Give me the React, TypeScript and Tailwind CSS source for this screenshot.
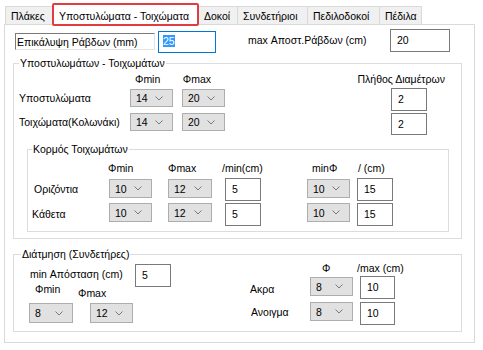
import React from 'react';

const Chevron = () => (
  <svg width="8" height="5" viewBox="0 0 8 5" className="shrink-0">
    <polyline points="0.5,0.5 4,4 7.5,0.5" fill="none" stroke="#7a7a7a" strokeWidth="1" />
  </svg>
);

interface ComboProps {
  value: string;
  className?: string;
}

const Combo: React.FC<ComboProps> = ({ value, className = '' }) => (
  <div className={`flex items-center justify-between border border-[#adadad] bg-[#e1e1e1] pl-[5px] pr-[9px] ${className}`}>
    <span>{value}</span>
    <Chevron />
  </div>
);

const TextBox: React.FC<ComboProps> = ({ value, className = '' }) => (
  <div className={`border border-[#7a7a7a] bg-white pl-[6px] pt-[3px] ${className}`}>{value}</div>
);

const Tab: React.FC<{ label: string; className?: string }> = ({ label, className = '' }) => (
  <div className={`h-[18px] border border-b-0 border-[#d9d9d9] bg-[#f0f0f0] pl-[5px] pt-[2px] ${className}`}>{label}</div>
);

export default function App() {
  return (
    <div className="w-[483px] h-[350px] bg-white whitespace-nowrap text-[10.5px] leading-[14px] text-black font-['Liberation_Sans',Arial,sans-serif]">
      {/* tab strip */}
      <div className="flex items-end h-[24px] pl-[5px]">
        <Tab label="Πλάκες" className="w-[47px] border-r-0" />
        <div className="relative z-10 -mb-[2px] h-[23px] w-[147px] rounded-[2px] border-2 border-[#e23b40] bg-white pl-[5px] pt-[4px]">
          Υποστυλώματα - Τοιχώματα
        </div>
        <Tab label="Δοκοί" className="w-[39px] border-l-0" />
        <Tab label="Συνδετήριοι" className="w-[70px] border-l-0" />
        <Tab label="Πεδιλοδοκοί" className="w-[72px] border-l-0" />
        <Tab label="Πέδιλα" className="w-[42px] border-l-0" />
      </div>

      {/* page */}
      <div className="ml-[4px] w-[471px] h-[319px] border border-[#d9d9d9] bg-white">
        <div className="flex items-start pt-[4px]">
          <div className="ml-[10px] mt-[4px] w-[140px] h-[17px] border border-t-[#7a7a7a] border-l-[#7a7a7a] border-r-[#e3e3e3] border-b-[#e3e3e3] pl-[1px] pt-[1px]">
            Επικάλυψη Ράβδων (mm)
          </div>
          <div className="ml-[3px] mt-[2px] w-[58px] h-[22px] border border-[#0078d7] bg-white pl-[4px] pt-[2px]">
            <span className="bg-[#3399ff] text-white">25</span>
          </div>
          <div className="ml-[32px] mt-[4px] w-[142px]">max Αποστ.Ράβδων (cm)</div>
          <TextBox value="20" className="w-[60px] h-[23px]" />
        </div>

        {/* Υποστυλωμάτων - Τοιχωμάτων */}
        <div className="ml-[8px] mt-[10px] w-[449px] h-[176px] border border-[#dcdcdc]">
          <div className="-mt-[8px] ml-[5px] w-fit bg-white px-[1px] h-[14px]">Υποστυλωμάτων - Τοιχωμάτων</div>
          <div className="mt-[2px] flex h-[14px] pl-[121px]">
            <div className="w-[48px]">Φmin</div>
            <div className="w-[159px]">Φmax</div>
            <div className="w-[120px] text-center">Πλήθος Διαμέτρων</div>
          </div>
          <div className="mt-[2px] flex items-start h-[23px]">
            <div className="w-[116px] pl-[5px] mt-[3px]">Υποστυλώματα</div>
            <Combo value="14" className="mt-[1px] w-[43px] h-[18px]" />
            <Combo value="20" className="ml-[9px] mt-[1px] w-[43px] h-[18px]" />
            <TextBox value="2" className="ml-[166px] w-[36px] h-[23px]" />
          </div>
          <div className="mt-[2px] flex items-start h-[23px]">
            <div className="w-[116px] pl-[5px] mt-[2px]">Τοιχώματα(Κολωνάκι)</div>
            <Combo value="14" className="w-[43px] h-[18px]" />
            <Combo value="20" className="ml-[9px] w-[43px] h-[18px]" />
            <TextBox value="2" className="ml-[166px] w-[36px] h-[22px]" />
          </div>

          {/* Κορμός Τοιχωμάτων */}
          <div className="ml-[13px] mt-[13px] w-[422px] h-[83px] border border-[#dcdcdc]">
            <div className="-mt-[8px] ml-[4px] w-fit bg-white px-[1px] h-[14px]">Κορμός Τοιχωμάτων</div>
            <div className="mt-[5px] flex h-[14px] pl-[80px]">
              <div className="w-[60px]">Φmin</div>
              <div className="w-[54px]">Φmax</div>
              <div className="w-[90px]">/min(cm)</div>
              <div className="w-[46px]">minΦ</div>
              <div>/ (cm)</div>
            </div>
            <div className="mt-[3px] flex items-start h-[23px]">
              <div className="w-[81px] pl-[6px] mt-[4px]">Οριζόντια</div>
              <Combo value="10" className="mt-[1px] w-[43px] h-[19px]" />
              <Combo value="12" className="ml-[16px] mt-[1px] w-[44px] h-[19px]" />
              <TextBox value="5" className="ml-[13px] w-[36px] h-[23px]" />
              <Combo value="10" className="ml-[46px] mt-[1px] w-[43px] h-[19px]" />
              <TextBox value="15" className="ml-[7px] w-[36px] h-[23px]" />
            </div>
            <div className="mt-[2px] flex items-start h-[23px]">
              <div className="w-[81px] pl-[4px] mt-[4px]">Κάθετα</div>
              <Combo value="10" className="w-[43px] h-[19px]" />
              <Combo value="12" className="ml-[16px] w-[44px] h-[19px]" />
              <TextBox value="5" className="ml-[13px] w-[36px] h-[23px]" />
              <Combo value="10" className="ml-[46px] w-[43px] h-[19px]" />
              <TextBox value="15" className="ml-[7px] w-[36px] h-[23px]" />
            </div>
          </div>
        </div>

        {/* Διάτμηση (Συνδετήρες) */}
        <div className="ml-[8px] mt-[15px] w-[449px] h-[78px] border border-[#dcdcdc]">
          <div className="-mt-[8px] ml-[7px] w-fit bg-white px-[1px] h-[14px]">Διάτμηση (Συνδετήρες)</div>
          <div className="flex">
            <div className="w-[236px]">
              <div className="mt-[3px] flex items-start">
                <div className="w-[121px] pl-[16px] mt-[3px]">min Απόσταση (cm)</div>
                <TextBox value="5" className="w-[36px] h-[23px]" />
              </div>
              <div className="-mt-[5px] flex items-start">
                <div className="w-[64px] pl-[21px]">Φmin</div>
                <div className="mt-[4px]">Φmax</div>
              </div>
              <div className="mt-[3px] flex">
                <Combo value="8" className="ml-[15px] w-[44px] h-[20px]" />
                <Combo value="12" className="ml-[17px] w-[43px] h-[20px]" />
              </div>
            </div>
            <div>
              <div className="flex h-[14px] pl-[72px]">
                <div className="w-[35px]">Φ</div>
                <div>/max (cm)</div>
              </div>
              <div className="mt-[1px] flex items-start h-[23px]">
                <div className="w-[60px] mt-[6px]">Ακρα</div>
                <Combo value="8" className="mt-[1px] w-[43px] h-[19px]" />
                <TextBox value="10" className="ml-[7px] w-[35px] h-[23px]" />
              </div>
              <div className="mt-[3px] flex items-start h-[23px]">
                <div className="w-[60px] pl-[1px] mt-[3px]">Ανοιγμα</div>
                <Combo value="8" className="w-[43px] h-[19px]" />
                <TextBox value="10" className="ml-[7px] w-[35px] h-[23px]" />
              </div>
            </div>
          </div>
        </div>
      </div>
    </div>
  );
}
